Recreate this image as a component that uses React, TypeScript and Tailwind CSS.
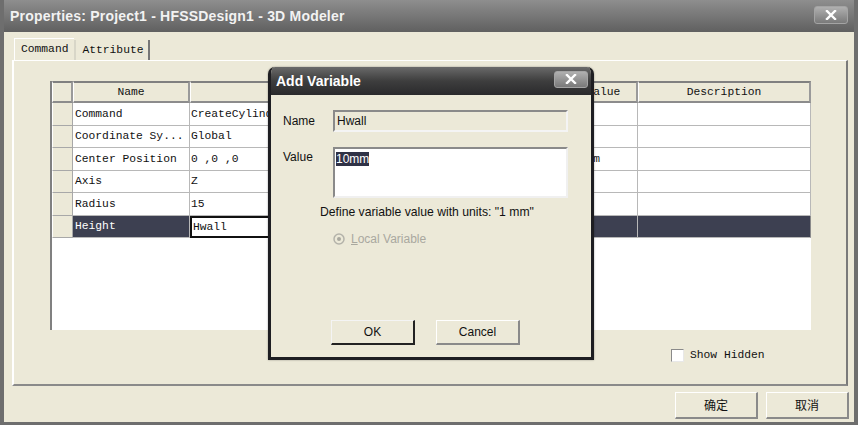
const rows = [
  { head: 'Command', value: 'CreateCylinder', unit: '', evaluated: '' },
  { head: 'Coordinate Sy...', value: 'Global', unit: '', evaluated: '' },
  { head: 'Center Position', value: '0 ,0 ,0', unit: '', evaluated: '0mm ,0mm ,0mm' },
  { head: 'Axis', value: 'Z', unit: '', evaluated: '' },
  { head: 'Radius', value: '15', unit: '', evaluated: '' },
  { head: 'Height', value: 'Hwall', unit: '', evaluated: '' },
];

const rowHeights = ['h-[23px]', 'h-[22px]', 'h-[23px]', 'h-[22px]', 'h-[23px]', 'h-[22px]'];

function XButton({ className = '' }: { className?: string }) {
  return (
    <div
      className={`flex items-center justify-center rounded-[3px] border border-[#a4a4a4] bg-gradient-to-b from-[#b0b0b0] to-[#7a7a7a] ${className}`}
    >
      <svg width="12" height="10" viewBox="0 0 12 10">
        <path d="M2 1 L10 9 M10 1 L2 9" stroke="#ffffff" strokeWidth="2.4" strokeLinecap="square" />
      </svg>
    </div>
  );
}

function WinButton({ label, className = '', dark = false }: { label: string; className?: string; dark?: boolean }) {
  return (
    <div
      className={`flex items-center justify-center bg-[#ece9d8] border ${
        dark
          ? 'border-t-[#f4f4f4] border-l-[#f4f4f4] border-r-[#222] border-b-[#222] border-r-2 border-b-2'
          : 'border-t-[#ffffff] border-l-[#ffffff] border-r-[#8a8a8a] border-b-[#8a8a8a] border-r-2 border-b-2'
      } ${className}`}
    >
      {label}
    </div>
  );
}

export default function App() {
  const mono = { fontFamily: '"Liberation Mono", "DejaVu Sans Mono", monospace' };
  const sans = { fontFamily: '"Liberation Sans", Arial, sans-serif' };

  return (
    <div className="relative w-[858px] h-[425px] overflow-hidden bg-[#ece9d8] border-x-[4px] border-b-[3px] border-[#6e6e6e] flex flex-col">
      {/* Title bar */}
      <div className="h-[32px] shrink-0 -mx-[4px] flex items-center justify-between px-[10px] bg-gradient-to-b from-[#8e8e8e] via-[#777777] to-[#606060]">
        <span className="font-bold text-[#f2f2f2] tracking-[0.2px]" style={{ fontFamily: '"Liberation Sans", Arial, sans-serif', fontSize: 14 }}>
          Properties: Project1 - HFSSDesign1 - 3D Modeler
        </span>
        <XButton className="w-[34px] h-[18px] mt-[-2px]" />
      </div>

      {/* Tabs */}
      <div className="flex items-end h-[28px] pl-[10px] pt-[6px]" style={mono}>
        <div className="h-[22px] px-[6px] flex items-center text-[11.3px] text-[#111] bg-[#ece9d8] border-t border-l border-white">
          Command
        </div>
        <div className="h-[20px] pl-[6px] pr-[5px] flex items-center text-[11.3px] text-[#111] border-l-2 border-l-[#d8d6c8] border-r-2 border-r-[#777]">
          Attribute
        </div>
      </div>

      {/* Tab panel */}
      <div className="ml-[8px] mr-[6px] h-[326px] border-t border-l-2 border-white border-r-2 border-r-[#7a7a7a] border-b-2 border-b-[#8a8a8a] flex flex-col">
        <div className="ml-[36px] mt-[20px] w-[761px] h-[249px] bg-white border-l-2 border-l-[#808080]" style={mono}>
          <div className="grid grid-cols-[21px_117px_210px_102px_136px_173px] h-[22px] text-[11.3px] text-[#111]">
            {['', 'Name', '', '', 'Evaluated Value', 'Description'].map((h, i) => (
              <div
                key={i}
                className="bg-[#ece9d8] flex items-center justify-center border-t-2 border-t-[#808080] border-b-2 border-b-[#8c8c8c] border-r-2 border-r-[#9a9a9a] border-l border-l-white"
              >
                {h}
              </div>
            ))}
          </div>
          {rows.map((r, i) => {
            const sel = i === 5;
            return (
              <div key={r.head} className={`grid grid-cols-[21px_117px_210px_102px_136px_173px] ${rowHeights[i]} text-[11.3px]`}>
                <div className="bg-[#ece9d8] border-b border-b-[#a8a8a8] border-r border-r-[#a8a8a8] border-l border-l-white" />
                <div className={`flex items-center pl-[2px] border-b border-r border-[#b8b8b8] ${sel ? 'bg-[#3d4051] text-white' : 'text-[#111]'}`}>
                  {r.head}
                </div>
                <div
                  className={`flex items-center pl-[1px] ${sel ? 'bg-white text-[#111] border-2 border-[#111]' : 'text-[#111] border-b border-r border-[#b8b8b8]'}`}
                >
                  {r.value}
                </div>
                <div className={`flex items-center pl-[2px] border-b border-r border-[#b8b8b8] ${sel ? 'bg-[#3d4051] text-white' : 'text-[#111]'}`}>
                  {r.unit}
                </div>
                <div className={`flex items-center pl-[10px] border-b border-r border-[#b8b8b8] ${sel ? 'bg-[#3d4051] text-white' : 'text-[#111]'}`}>
                  {r.evaluated}
                </div>
                <div className={`border-b border-r border-[#b8b8b8] ${sel ? 'bg-[#3d4051] border-r-[#8a8a8a]' : ''}`} />
              </div>
            );
          })}
        </div>

        <div className="flex items-center ml-[657px] mt-[17px] gap-[6px]" style={mono}>
          <div className="w-[13px] h-[13px] bg-white border border-t-[#8a8a8a] border-l-[#8a8a8a] border-r-[#e8e8e8] border-b-[#e8e8e8]" />
          <span className="text-[11.3px] text-[#111]">Show Hidden</span>
        </div>
      </div>

      {/* Bottom buttons */}
      <div className="flex justify-end gap-[8px] mr-[5px] mt-[6px]" style={{ fontFamily: '"Noto Sans CJK SC", sans-serif' }}>
        <WinButton label="确定" className="w-[83px] h-[27px] text-[12px] text-[#111]" />
        <WinButton label="取消" className="w-[83px] h-[27px] text-[12px] text-[#111]" />
      </div>

      {/* Add Variable dialog */}
      <div className="absolute left-[264px] top-[67px] w-[326px] h-[293px] flex flex-col rounded-t-[7px] overflow-hidden bg-[#ece9d8] border-x-[3px] border-b-[3px] border-[#1e1e22] shadow-[0_0_2px_rgba(0,0,0,0.4)]">
        <div className="h-[28px] shrink-0 -mx-[3px] flex items-center justify-between pl-[8px] pr-[6px] bg-gradient-to-b from-[#6a6a6a] via-[#3e3e3e] to-[#2a2a2c]">
          <span className="text-white font-bold" style={{ fontFamily: '"Liberation Sans", Arial, sans-serif', fontSize: 14 }}>
            Add Variable
          </span>
          <XButton className="w-[34px] h-[17px] mt-[-4px]" />
        </div>

        <div className="flex flex-col text-[12px] text-[#111]" style={sans}>
          <div className="flex items-center mt-[15px] ml-[12px]">
            <span className="w-[50px]">Name</span>
            <div className="w-[235px] h-[22px] flex items-center pl-[2px] bg-[#ece9d8] border-2 border-t-[#8a8a8a] border-l-[#8a8a8a] border-r-[#f4f4f4] border-b-[#f4f4f4]">
              Hwall
            </div>
          </div>
          <div className="flex items-start mt-[15px] ml-[12px]">
            <span className="w-[50px] mt-[1px]">Value</span>
            <div className="w-[235px] h-[51px] pl-[1px] pt-[1px] bg-white border-2 border-t-[#8a8a8a] border-l-[#8a8a8a] border-r-[#f0f0f0] border-b-[#f0f0f0]">
              <span className="bg-[#2f3246] text-white leading-[14px] inline-block">10mm</span>
            </div>
          </div>
          <div className="ml-[49px] mt-[5px] text-[12.2px]">Define variable value with units: "1 mm"</div>
          <div className="ml-[62px] mt-[9px] flex items-center gap-[6px] text-[#a9a89f]">
            <svg width="12" height="12" viewBox="0 0 12 12">
              <circle cx="6" cy="6" r="5" fill="none" stroke="#b4b3aa" strokeWidth="1.5" />
              <circle cx="6" cy="6" r="2" fill="#a9a89f" />
            </svg>
            <span>
              <span className="underline">L</span>ocal Variable
            </span>
          </div>
          <div className="flex ml-[60px] mt-[72px] gap-[21px]">
            <WinButton dark label="OK" className="w-[84px] h-[25px] text-[12px]" />
            <WinButton label="Cancel" className="w-[84px] h-[25px] text-[12px]" />
          </div>
        </div>
      </div>
    </div>
  );
}
